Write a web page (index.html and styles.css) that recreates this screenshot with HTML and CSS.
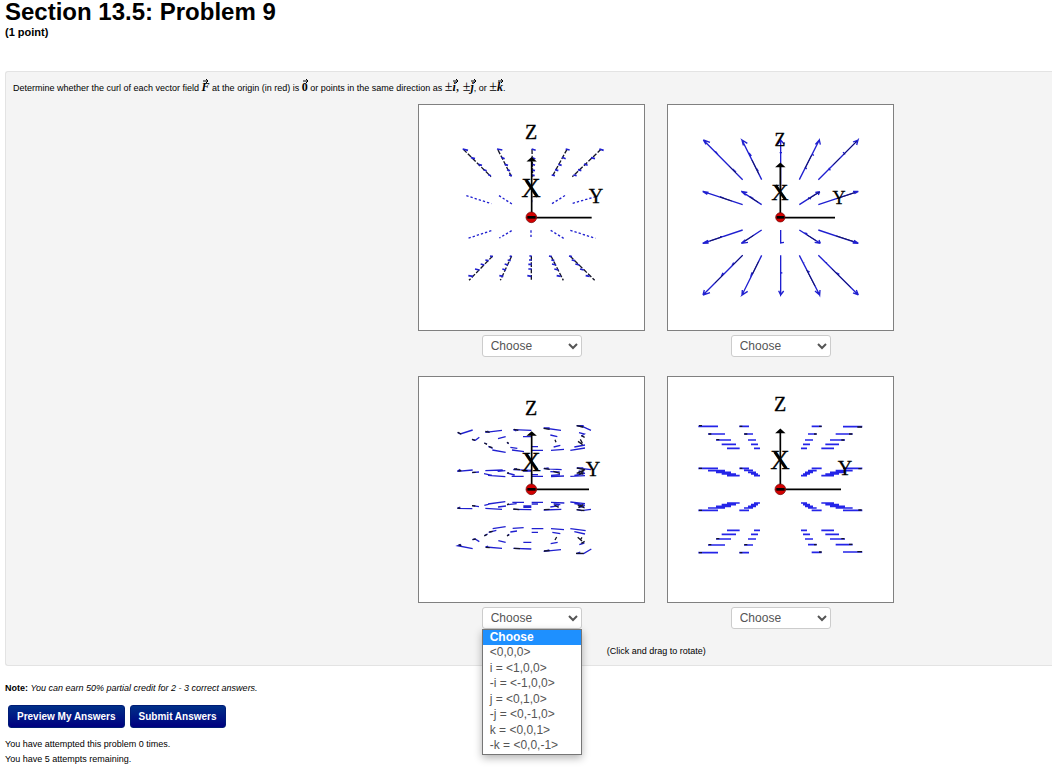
FILE: index.html
```html
<!DOCTYPE html>
<html lang="en">
<head>
<meta charset="utf-8">
<title>Section 13.5: Problem 9</title>
<link rel="stylesheet" href="styles.css">
</head>
<body>
<header class="heading">
<h1 class="title">Section 13.5: Problem 9</h1>
<p class="points">(1 point)</p>
</header>
<form>
<main class="panel">
<p class="question">Determine whether the curl of each vector field <span class="vec">F<svg viewBox="0 0 6 4"><path d="M0 2H5M3 0L5 2L3 4"/></svg></span> at the origin (in red) is <span class="vec upright">0<svg viewBox="0 0 6 4"><path d="M0 2H5M3 0L5 2L3 4"/></svg></span> or points in the same direction as <span class="math">±<span class="vec">i<svg viewBox="0 0 6 4"><path d="M0 2H5M3 0L5 2L3 4"/></svg></span>, ±<span class="vec">j<svg viewBox="0 0 6 4"><path d="M0 2H5M3 0L5 2L3 4"/></svg></span></span>, or <span class="math">±<span class="vec">k<svg viewBox="0 0 6 4"><path d="M0 2H5M3 0L5 2L3 4"/></svg></span></span>.</p>
<div class="fields">
<section class="field">
<svg class="plot" viewBox="0 0 225 225" role="img" aria-label="Vector field 1">
<g transform="translate(21 5) scale(.33333)">
<g class="ink dash"><path d="M70 118L153 200M174 120L214 199M276 118L278 200M381 118L337 199M483 118L397 200M158 438L87 511M215 438L181 511M274 438V511M333 438L370 511M390 438L464 511"/></g>
<g class="blue"><path d="M68 117L84 121M93 143L105 146M115 163L126 166M131 179L140 182M145 194L153 197M171 117L187 120M184 142L194 146M194 163L204 166M201 179L210 182M207 195L216 197M275 117L287 121M277 143L286 147M277 163L285 166M276 180L285 182M276 195L284 197M377 117L389 120M366 142L377 146M355 163L365 166M345 179L355 182M335 195L345 197M478 117L491 121M453 143L465 146M432 162L443 166M414 179L424 182M400 195L410 197M150 438L158 440M136 450L146 452M122 462L133 465M105 477L118 480M85 497L99 499M209 438L215 440M203 450L212 452M194 462L204 465M187 477L198 480M178 497L190 499M268 438H275M267 450H275M265 463H275M265 477H275M262 497L274 499M327 438L335 440M334 450L343 452M336 462L348 465M343 477L355 480M350 497L362 499M387 438L396 440M395 450L405 452M406 462L418 465M420 477L431 480M437 497L449 499"/>
<path class="dots" d="M79 257L154 281M177 257L216 282M336 281L376 256M398 280L474 258M154 362L84 385M215 362L178 384M273 361V386M332 361L371 385M391 361L466 385M275 257V280"/></g>
<g class="axis"><path d="M275 323V148M275 323H455"/><path class="tip" d="M275 144L284 152H266Z"/></g>
<circle class="origin" cx="274" cy="322" r="16"/><path class="bar" d="M262 322H287"/>
<path class="glyph-shadow" d="M259 212L292 260"/>
</g>
<text x="112" y="34" class="axis-name">Z</text><text x="112" y="92" class="axis-name big">X</text><text x="177" y="98" class="axis-name">Y</text>
</svg>
<select class="answer" aria-label="Answer 1"><option>Choose</option><option>&lt;0,0,0&gt;</option></select>
</section>
<section class="field">
<svg class="plot" viewBox="0 0 225 225" role="img" aria-label="Vector field 2">
<g transform="translate(22 5) scale(.33333)">
<g class="blue solid"><path d="M158 209L40 90L60 97M40 90L48 103M77 125L84 134M128 177L138 186M215 209L156 90L172 100M156 90L160 106M177 129L184 138M200 176L205 184M272 240V90L282 102M272 90L264 102M269 128H276M328 209L388 90L391 104M388 90L376 103M366 130L371 137M345 170L350 177M385 209L504 90L500 105M504 90L489 96M459 127L466 133M416 174L421 181M158 284L38 244L56 247M38 244L52 253M90 260L103 265M215 284L154 244L172 247M154 244L167 256M180 260L190 266M328 284L389 245L376 247M389 245L385 255M354 263L363 267M385 284L505 244L489 244M505 244L493 251M158 360L38 400L56 399M38 400L54 391M90 380L104 379M215 360L154 400L174 397M154 400L166 389M272 360V399L282 397M328 360L391 400L374 397M391 400L387 390M343 369L352 371M385 360L505 400L488 399M505 400L492 391M433 376L444 379M158 436L39 555L60 548M39 555L43 540M94 499L99 488M126 467L131 458M215 436L156 555L173 544M156 555L157 540M182 501L186 487M272 436V555L281 543M272 555L266 542M272 490L277 488M328 436L389 555L390 540M389 555L375 543M351 482L359 486M336 456L343 459M385 436L505 555L499 540M505 555L489 549M438 488L448 493M405 456L411 459"/></g>
<g class="ink accent"><path d="M118 169L140 191M186 150L207 193M345 175L365 135M430 164L450 144M460 134L500 94M90 261L125 273M178 260L205 277M355 267L389 246M440 266L494 248M60 393L95 381M165 393L191 376M350 374L378 392M439 378L490 394M158 436L128 466M100 494L75 519M206 454L187 493M350 480L375 528M425 476L482 532"/></g>
<g class="axis"><path d="M271 323V165M271 323H435"/><path class="tip" d="M271 161L280 169H262Z"/></g>
<circle class="origin" cx="271" cy="322" r="14"/><path class="bar" d="M260 322H283"/>
<path class="glyph-shadow" d="M257 226L286 268"/>
</g>
<text x="112" y="41" class="axis-name small">Z</text><text x="112" y="95" class="axis-name medium">X</text><text x="171" y="99" class="axis-name small">Y</text>
</svg>
<select class="answer" aria-label="Answer 2"><option>Choose</option><option>&lt;0,0,0&gt;</option></select>
</section>
<section class="field">
<svg class="plot" viewBox="0 0 225 225" role="img" aria-label="Vector field 3">
<g transform="translate(21 13) scale(.33333)">
<g class="blue solid"><path d="M98 120L61 132L53 127M186 121L136 127L145 123M274 121L220 119L229 123M363 121L311 114L329 114M453 121L430 111L410 107H431M96 148L106 151L118 142M174 146L197 140M249 140H274M331 135L352 140M417 128L433 132L424 138M133 159L141 162M201 157L206 161M275 170H294M341 171L361 166M403 171L435 165M145 169L158 175M157 180L197 187M211 172L232 175M216 180L252 185M275 181H309M333 181L372 178M391 181L435 174M98 240L52 244L61 238M188 240L136 242M276 241L220 239L231 236M365 239L311 236L326 234M453 239L410 234H430M96 248L117 246M173 244L196 242M249 243H274M331 245L359 246M416 243L433 247M132 251L156 256M144 256L196 260M201 249L224 255M215 259H251M275 254H294M274 259H309M333 256L360 254M333 260L372 258M391 259L435 257M403 256L435 250M97 356L52 355L61 351M186 358L136 355M274 359L220 358M364 358L311 360M453 358L425 362L410 359M96 347L117 350M133 346L157 340M144 342L196 335M174 351L198 348M201 344L230 341M217 337L252 337M250 352H274M250 348H274M275 337H309M275 342H294M333 337L373 339M341 342L361 344M331 351L357 347M391 336L435 341M403 341L435 346M416 353L433 348M98 476L53 467L63 463M186 475L137 471L144 468M274 477L220 475M363 479L311 484L328 480M454 477L431 491H409L421 486M97 449L105 447L118 455M133 437L143 432M146 427L169 421M158 416L197 410M175 452L197 457M250 457H274M202 437L208 433M211 426L231 423M218 415L251 413M275 416H310M275 427H294M333 416L372 419M337 427L361 431M332 461L353 457M391 416L437 422M403 425L435 432M418 464L433 459"/></g>
<g class="ink"><path d="M53 127L64 132M136 124L149 127M222 118L235 121M311 115L329 118M410 107L430 111M133 159L141 163M147 170L157 173M96 148L105 151M201 157L206 160M345 149L348 157M414 154L428 164M424 137L434 142M421 148L427 159M55 243L64 242M222 237L240 239M312 235L329 238M411 234L435 239M340 244L360 250M410 250L435 239M414 247L430 252M418 254L430 244M97 247L107 247M202 249L207 249M53 354L61 355M220 357L238 359M312 359L329 358M410 359L433 362M413 345L434 354M415 352L430 344M343 345L356 352M96 347L106 348M201 344L207 342M56 464L64 467M137 472L149 473M222 475L240 476M312 483L329 482M408 490H431M133 438L141 433M148 426L158 424M98 449L107 447M201 438L207 434M345 450L350 441M413 442L426 453M424 460L434 454M421 450L426 442"/></g>
<g class="axis"><path d="M275 298V130M275 298H447"/><path class="tip" d="M275 127L284 135H266Z"/></g>
<circle class="origin" cx="274" cy="298" r="16"/><path class="bar" d="M262 298H287"/>
<path class="glyph-shadow" d="M259 193L292 240"/>
</g>
<text x="112" y="38" class="axis-name">Z</text><text x="112" y="94" class="axis-name big">X</text><text x="174" y="99" class="axis-name">Y</text>
</svg>
<div class="picker">
<select class="answer" aria-label="Answer 3"><option>Choose</option><option>&lt;0,0,0&gt;</option></select>
<ul class="menu" role="listbox" aria-label="Answer 3 choices">
<li class="choice selected" role="option" aria-selected="true">Choose</li>
<li class="choice" role="option">&lt;0,0,0&gt;</li>
<li class="choice" role="option">i = &lt;1,0,0&gt;</li>
<li class="choice" role="option">-i = &lt;-1,0,0&gt;</li>
<li class="choice" role="option">j = &lt;0,1,0&gt;</li>
<li class="choice" role="option">-j = &lt;0,-1,0&gt;</li>
<li class="choice" role="option">k = &lt;0,0,1&gt;</li>
<li class="choice" role="option">-k = &lt;0,0,-1&gt;</li>
</ul>
</div>
</section>
<section class="field">
<svg class="plot" viewBox="0 0 225 225" role="img" aria-label="Vector field 4">
<g transform="translate(22 13) scale(.33333)">
<g class="blue level"><path d="M25 109H84M54 132H105M78 150H123M95 163H138M111 175H149M148 109H177M162 132H189M174 150H198M183 163H204M192 175H210M365 109H395M354 132H380M345 150H369M339 163H360M333 175H351M459 110H517M437 132H488M420 150H465M406 163H447M394 175H432
M25 235H84M54 242H105M78 247H123M95 252H138M111 257H149M148 235H177M162 241H189M174 247H198M183 252H204M192 257H210M365 235H395M354 242H380M345 247H369M339 252H360M333 257H351M459 235H517M437 242H488M420 247H465M406 252H447M394 257H432
M25 361H84M54 354H105M78 349H123M95 344H138M111 339H149M148 361H177M162 354H189M174 349H198M183 344H204M192 339H210M365 361H395M354 354H380M345 349H369M339 344H360M333 339H351M459 361H517M437 354H488M420 349H465M406 344H447M394 339H432
M25 488H84M54 465H105M78 447H123M95 433H138M111 421H149M148 488H177M162 465H189M174 447H198M183 433H204M192 421H210M365 487H395M354 464H380M345 447H369M339 433H360M333 421H351M459 486H517M437 464H488M420 447H465M406 433H447M394 421H432"/></g>
<g class="ink"><path d="M27 107H36M56 132H64M79 149H88M149 109H157M163 132H172M387 109H395M372 132H380M502 111H516M477 132H487M454 150H463M27 235H36M150 235H157M505 236H515M27 361H36M505 360H515M27 488H36M56 464H64M79 446H88M149 488H157M163 464H172M387 486H395M372 464H380M502 485H516M477 463H487M454 446H463"/></g>
<g class="axis"><path d="M271 298V122M271 298H453"/><path class="tip" d="M271 119L280 127H262Z"/></g>
<circle class="origin" cx="271" cy="298" r="16"/><path class="bar" d="M259 298H284"/>
<path class="glyph-shadow" d="M255 187L288 235"/>
</g>
<text x="112" y="34" class="axis-name">Z</text><text x="112" y="92" class="axis-name big">X</text><text x="177" y="98" class="axis-name">Y</text>
</svg>
<select class="answer" aria-label="Answer 4"><option>Choose</option><option>&lt;0,0,0&gt;</option></select>
</section>
<p class="hint">(Click and drag to rotate)</p>
</div>
</main>
<p class="note"><b>Note:</b> <i>You can earn 50% partial credit for 2 - 3 correct answers.</i></p>
<div class="actions">
<button class="action" type="button">Preview My Answers</button>
<button class="action" type="button">Submit Answers</button>
</div>
<p class="status">You have attempted this problem 0 times.<br>You have 5 attempts remaining.</p>
</form>
</body>
</html>
```
FILE: styles.css
```css
* { box-sizing: border-box; }
body { margin: 0; background: #fff; color: #000; font: 9px/15px "Liberation Sans", Arial, sans-serif; padding-left: 5px; overflow-x: hidden; }
p, h1, ul { margin: 0; padding: 0; }
.heading { height: 71px; }
.title { font-size: 24px; line-height: 24px; }
.points { font-size: 11px; line-height: 16px; font-weight: bold; }
.panel { background: #f4f4f4; border: 1px solid #e3e3e3; border-right: 0; border-radius: 3px 0 0 3px; padding: 7px 0 6px 7px; }
.question { line-height: 18px; height: 25px; }
.math { font: 14px/12px "Liberation Serif", serif; }
.vec { position: relative; font: italic bold 12px/12px "Liberation Serif", serif; }
.vec.upright { font-style: normal; }
.vec svg { position: absolute; left: 1px; top: -1px; width: 6px; height: 4px; fill: none; stroke: #000; stroke-width: 1; }
.fields { margin-left: 39%; display: grid; grid-template-columns: 227px 227px; column-gap: 22px; row-gap: 19px; width: 476px; }
.field { display: flex; flex-direction: column; align-items: center; gap: 4px; }
.plot { width: 227px; height: 227px; background: #fff; border: 1px solid #808080; }
.answer { display: block; width: 100px; height: 22px; padding: 0 4px; border: 1px solid #ccc; border-radius: 3px; background-color: #fff; color: #555; font: 12px "Liberation Sans", Arial, sans-serif; }
.picker { position: relative; }
.menu { position: absolute; z-index: 1; top: 22px; left: 0; display: flex; flex-direction: column; justify-content: space-between; width: 100px; height: 126px; list-style: none; border: 1px solid #767676; background: #fff; color: #555; font-size: 12px; padding-bottom: 1px; box-shadow: 0 3px 8px rgba(0, 0, 0, .3); }
.choice { padding-left: 7px; line-height: 15px; }
.choice.selected { background: #1e90ff; color: #fff; font-weight: bold; }
.hint { grid-column: 1 / 3; text-align: center; margin-top: -4px; }
.note { margin-top: 15px; }
.actions { display: flex; gap: 5px; padding: 9px 3px 9px; }
.action { height: 23px; padding: 0 8px; border: 1px solid #001c76; border-radius: 3px; background: linear-gradient(#003088, #000080); color: #fff; font: bold 10px "Liberation Sans", Arial, sans-serif; }
.ink, .blue, .axis, .bar, .glyph-shadow { fill: none; stroke-width: 4; }
.ink { stroke: #151527; }
.ink.dash { stroke-width: 4; stroke-dasharray: 14 5; }
.ink.accent { stroke: #161660; stroke-width: 3; }
.blue { stroke: #2020d0; stroke-width: 5; }
.blue.solid { stroke-width: 4; }
.blue.level { stroke: #2424e8; stroke-width: 5; }
.dots { stroke-width: 4; stroke-dasharray: 7 6; }
.axis { stroke: #000; stroke-width: 5; }
.tip { fill: #000; }
.origin { fill: #d40000; stroke: #600; stroke-width: 2; }
.bar { stroke: #000; stroke-width: 8; }
.glyph-shadow { stroke: #111; stroke-width: 8; }
.axis-name { font: 20px "Liberation Serif", serif; text-anchor: middle; stroke: #000; stroke-width: .3; }
.axis-name.small { font-size: 18px; }
.axis-name.medium { font-size: 24px; }
.axis-name.big { font-size: 27px; }
```
